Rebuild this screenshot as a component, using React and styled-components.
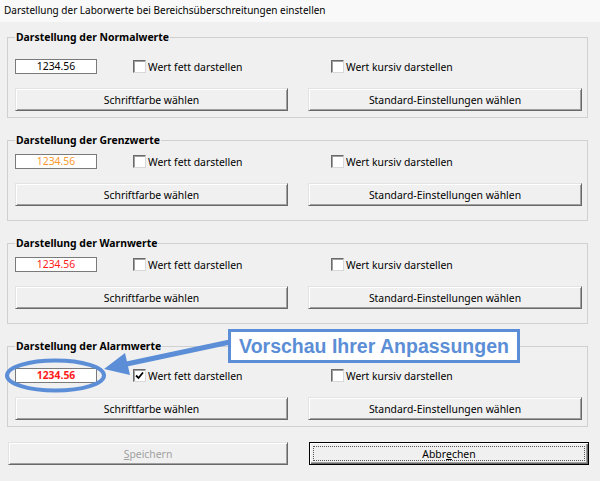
import React from "react";
import styled, { createGlobalStyle } from "styled-components";

const GlobalStyle = createGlobalStyle`
  html, body {
    margin: 0;
    padding: 0;
    background: #f0f0f0;
  }
  body {
    font-family: "Noto Sans", "Liberation Sans", sans-serif;
    font-size: 10.4px;
    color: #000;
  }
`;

// compact: the middle two groups sit their controls 8px higher
const groups = [
  { title: "Darstellung der Normalwerte", color: "#000000", bold: false, compact: false },
  { title: "Darstellung der Grenzwerte", color: "#f99a30", bold: false, compact: true },
  { title: "Darstellung der Warnwerte", color: "#ff1a1a", bold: false, compact: true },
  { title: "Darstellung der Alarmwerte", color: "#ff1a1a", bold: true, compact: false },
];

function CheckIcon() {
  return (
    <svg width="9" height="9" viewBox="0 0 9 9">
      <polyline
        points="1,4.5 3.5,7 8,1.5"
        fill="none"
        stroke="#000"
        strokeWidth="1.8"
      />
    </svg>
  );
}

function SettingsGroup({ group }) {
  return (
    <Group $compact={group.compact}>
      <Legend>{group.title}</Legend>
      <PreviewRow>
        <Preview $color={group.color} $bold={group.bold}>
          1234.56
        </Preview>
        <Check $width={198}>
          <Box>{group.bold ? <CheckIcon /> : null}</Box>
          Wert fett darstellen
        </Check>
        <Check>
          <Box />
          Wert kursiv darstellen
        </Check>
      </PreviewRow>
      <ButtonRow>
        <Button>Schriftfarbe wählen</Button>
        <Button>Standard-Einstellungen wählen</Button>
      </ButtonRow>
    </Group>
  );
}

export default function App() {
  return (
    <Window>
      <GlobalStyle />
      <TitleBar>Darstellung der Laborwerte bei Bereichsüberschreitungen einstellen</TitleBar>
      <Body>
        {groups.map((g) => (
          <SettingsGroup key={g.title} group={g} />
        ))}
        <Footer>
          <Button $disabled>
            <u>S</u>peichern
          </Button>
          <DefaultButton>
            <Focus>
              Abbr<u>e</u>chen
            </Focus>
          </DefaultButton>
        </Footer>
      </Body>
      <Annotation>
        <svg width="600" height="481" viewBox="0 0 600 481">
          <ellipse
            cx="55.5"
            cy="375.5"
            rx="48.5"
            ry="15"
            fill="none"
            stroke="#5b8ed6"
            strokeWidth="4"
          />
          <line
            x1="230"
            y1="342"
            x2="122"
            y2="365"
            stroke="#5b8ed6"
            strokeWidth="5"
          />
          <polygon points="104,369 125,353 130,375" fill="#5b8ed6" />
        </svg>
        <Callout>Vorschau Ihrer Anpassungen</Callout>
      </Annotation>
    </Window>
  );
}

const Window = styled.div`
  position: relative;
  width: 600px;
  height: 481px;
  background: #f0f0f0;
  overflow: hidden;
`;

const TitleBar = styled.div`
  height: 22px;
  line-height: 21px;
  padding-left: 4px;
  background: #f9f9f9;
  font-size: 10px;
  white-space: nowrap;
`;

const Body = styled.div`
  display: flex;
  flex-direction: column;
  gap: 14px;
  padding: 7px 12px 0 7px;
`;

const Group = styled.fieldset`
  margin: 0;
  min-width: 0;
  height: 89px;
  box-sizing: border-box;
  padding: ${(p) => (p.$compact ? "6px" : "14px")} 6px 5px 7px;
  border: 1px solid #d0d0d0;
  display: flex;
  flex-direction: column;
  gap: 14px;
`;

const Legend = styled.legend`
  padding: 0 1px;
  font-weight: bold;
  line-height: 16px;
`;

const PreviewRow = styled.div`
  display: flex;
  align-items: center;
  height: 15px;
`;

const Preview = styled.div`
  width: 82px;
  height: 15px;
  box-sizing: border-box;
  margin-right: 36px;
  border: 1px solid #7a7a7a;
  background: #fff;
  color: ${(p) => p.$color};
  font-weight: ${(p) => (p.$bold ? "bold" : "normal")};
  text-align: center;
  line-height: 13px;
`;

const Check = styled.label`
  display: flex;
  align-items: center;
  gap: 2px;
  width: ${(p) => (p.$width ? `${p.$width}px` : "auto")};
  white-space: nowrap;
`;

const Box = styled.span`
  width: 13px;
  height: 13px;
  box-sizing: border-box;
  display: flex;
  align-items: center;
  justify-content: center;
  border: 1px solid;
  border-color: #6a6a6a #d8d8d8 #d8d8d8 #6a6a6a;
  background: #fff;
  box-shadow: inset 1px 1px 0 #a0a0a0;
`;

const ButtonRow = styled.div`
  display: grid;
  grid-template-columns: 273px 274px;
  column-gap: 20px;
`;

const Button = styled.div`
  height: 23px;
  box-sizing: border-box;
  display: flex;
  align-items: center;
  justify-content: center;
  background: #f0f0f0;
  border: 1px solid;
  border-color: #e3e3e3 #696969 #696969 #e3e3e3;
  box-shadow: inset 1px 1px 0 #ffffff, inset -1px -1px 0 #a0a0a0;
  color: ${(p) => (p.$disabled ? "#a0a0a0" : "#000")};
  white-space: nowrap;
  u {
    text-underline-offset: 1px;
  }
`;

const Footer = styled.div`
  display: grid;
  grid-template-columns: 280px 280px;
  column-gap: 21px;
  padding-left: 1px;
  margin-top: 1px;
`;

const DefaultButton = styled(Button)`
  border: 1px solid #000;
  box-shadow: inset 1px 1px 0 #ffffff, inset -1px -1px 0 #696969,
    inset -2px -2px 0 #a0a0a0;
  padding: 3px;
  align-items: stretch;
  justify-content: stretch;
`;

const Focus = styled.div`
  flex: 1;
  display: flex;
  align-items: center;
  justify-content: center;
  border: 1px dotted #555;
`;

const Annotation = styled.div`
  position: absolute;
  inset: 0;
  pointer-events: none;
  svg {
    position: absolute;
    left: 0;
    top: 0;
  }
`;

const Callout = styled.div`
  position: absolute;
  left: 228px;
  top: 329px;
  width: 292px;
  height: 34px;
  box-sizing: border-box;
  border: 3px solid #5b8ed6;
  background: #fff;
  color: #5b8ed6;
  font-family: "Liberation Sans", Arial, sans-serif;
  font-weight: bold;
  font-size: 19.5px;
  line-height: 28px;
  text-align: center;
  white-space: nowrap;
`;
